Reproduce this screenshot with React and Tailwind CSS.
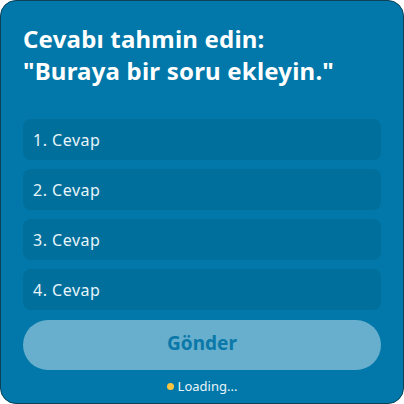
export default function App() {
  const answers = ["1. Cevap", "2. Cevap", "3. Cevap", "4. Cevap"];
  return (
    <div className="w-[404px] h-[404px] bg-white" style={{ fontFamily: '"Noto Sans", "Open Sans", sans-serif' }}>
      <div className="w-full h-full rounded-[16px] border border-[#0b4258] bg-[#0178a9] flex flex-col px-[22px] pt-[22px]">
        <h1 className="text-white font-bold text-[24px] leading-[32px] tracking-[0.2px]">
          Cevabı tahmin edin:<br />"Buraya bir soru ekleyin."
        </h1>
        <div className="mt-[32px] flex flex-col gap-[9px]">
          {answers.map((a) => (
            <div key={a} className="h-[41px] rounded-[8px] bg-[#006f9b] flex items-center px-[10px] text-[#e8f4fa] text-[16px] tracking-[0.5px]">
              {a}
            </div>
          ))}
        </div>
        <button className="mt-[10px] h-[50px] rounded-full bg-[#67afcd] text-[#0a78a8] font-bold text-[19px] flex items-center justify-center pb-[3px]">
          Gönder
        </button>
        <div className="mt-[7px] flex items-center justify-center gap-[4px] text-[#e8f4fa] text-[13px]">
          <span className="w-[7px] h-[7px] rounded-full bg-[#f9c540]"></span>
          <span>Loading...</span>
        </div>
      </div>
    </div>
  );
}
